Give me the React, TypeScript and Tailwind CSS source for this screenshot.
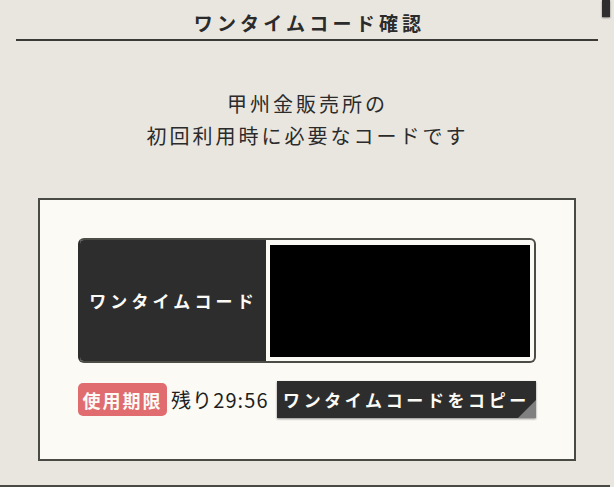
const jp = "font-['Noto_Sans_CJK_JP',sans-serif]";

export default function App() {
  return (
    <div className={`relative h-[487px] w-full overflow-hidden bg-[#e9e6e0] text-[#2b2b2b] ${jp}`}>
      {/* top right tab, mostly cut off */}
      <div className="absolute right-[4px] top-0 h-[17px] w-[8px] bg-[#2d2d2d] shadow-[0_1px_2px_rgba(0,0,0,0.5)]" />

      <header className="ml-4 w-[582px] border-b-[2px] border-[#3a3a36] pb-[3px] pl-[5px] pt-[9px] text-center">
        <h1 className="text-[19px] font-bold leading-[27px] tracking-[4.2px]">ワンタイムコード確認</h1>
      </header>

      <div className="w-[614px] pl-[1px] pt-[47px] text-center text-[20px] leading-[32px] tracking-[3px] text-[#2b2b2b]">
        <p>甲州金販売所の</p>
        <p>初回利用時に必要なコードです</p>
      </div>

      <section className="ml-[38px] mt-[46px] h-[263px] w-[538px] border-2 border-[#4a4a45] bg-[#fbfaf5] px-[38px] pt-[38px]">
        <div className="flex h-[125px] w-[458px] overflow-hidden rounded-[6px] border-2 border-[#4d4d48] border-l-[#2d2d2d] bg-[#fbfaf5]">
          <div className="flex w-[186px] items-center justify-center bg-[#2d2d2d] pl-[1px] text-[17px] font-bold tracking-[4.1px] text-[#fbfaf5]">
            ワンタイムコード
          </div>
          <div className="ml-[4px] mr-[4px] mt-[5px] h-[112px] flex-1 bg-black" />
        </div>

        <div className="mt-[18px] flex w-[458px] items-center">
          <span className="flex h-[33px] w-[89px] items-center justify-center rounded-[5px] bg-[#e06c6f] text-[18px] font-bold leading-none tracking-[2px] text-[#fbfaf5]">
            使用期限
          </span>
          <span className="ml-[4px] text-[20px] leading-none tracking-[1.1px] text-[#1f1f1f]">残り29:56</span>
          <button className="relative ml-auto flex h-[37px] w-[259px] items-center justify-center overflow-hidden bg-[#2d2d2d] text-[17px] font-bold tracking-[3.6px] text-[#fbfaf5] shadow-[0_1px_2px_rgba(0,0,0,0.45)]">
            ワンタイムコードをコピー
            <svg className="absolute bottom-0 right-0" width="18" height="18" viewBox="0 0 18 18">
              <path d="M18 0V18H0Z" fill="#808080" />
            </svg>
          </button>
        </div>
      </section>

      <div className="absolute bottom-0 left-0 h-[2px] w-[610px] bg-[#4a4a45]" />
    </div>
  );
}
